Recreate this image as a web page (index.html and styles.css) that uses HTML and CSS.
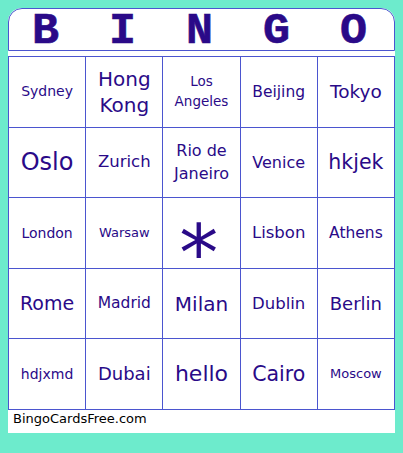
FILE: index.html
```html
<!DOCTYPE html>
<html>
<head>
<meta charset="utf-8">
<link rel="stylesheet" href="styles.css">
</head>
<body>
<div class="card">
  <div class="head">
    <span>B</span><span>I</span><span>N</span><span>G</span><span>O</span>
  </div>
  <div class="grid">
    <div class="cell s14">Sydney</div>
    <div class="cell s20 tall">Hong<br>Kong</div>
    <div class="cell s135 mid">Los<br>Angeles</div>
    <div class="cell s155">Beijing</div>
    <div class="cell s185">Tokyo</div>

    <div class="cell s24">Oslo</div>
    <div class="cell s165">Zurich</div>
    <div class="cell s16 mid2">Rio de<br>Janeiro</div>
    <div class="cell s16">Venice</div>
    <div class="cell s205">hkjek</div>

    <div class="cell s14">London</div>
    <div class="cell s13">Warsaw</div>
    <div class="cell free"><span class="star">*</span></div>
    <div class="cell s165">Lisbon</div>
    <div class="cell s155">Athens</div>

    <div class="cell s19">Rome</div>
    <div class="cell s155">Madrid</div>
    <div class="cell s20">Milan</div>
    <div class="cell s165">Dublin</div>
    <div class="cell s18">Berlin</div>

    <div class="cell s14">hdjxmd</div>
    <div class="cell s18">Dubai</div>
    <div class="cell s22">hello</div>
    <div class="cell s205">Cairo</div>
    <div class="cell s13">Moscow</div>
  </div>
  <div class="foot">BingoCardsFree.com</div>
</div>
</body>
</html>
```

FILE: styles.css
```css
html, body {
  margin: 0;
  padding: 0;
  background: #6debcc;
}
body {
  padding: 8px 8px 0 8px;
  font-family: "DejaVu Sans", sans-serif;
}
.card {
  width: 387px;
  background: #ffffff;
  border-radius: 14px 14px 0 0;
}
.head {
  box-sizing: border-box;
  height: 43px;
  border: 1px solid #4b55cf;
  border-radius: 14px 14px 0 0;
  display: grid;
  grid-template-columns: repeat(5, 1fr);
  align-items: center;
  justify-items: center;
  font-family: "Liberation Mono", "Courier New", monospace;
  font-weight: bold;
  font-size: 45px;
  line-height: 1;
  color: #2a0a88;
  padding-bottom: 2px;
}
.head span {
  transform: translateX(-2px);
  -webkit-text-stroke: 0.6px #2a0a88;
}
.grid {
  margin-top: 5px;
  box-sizing: border-box;
  width: 387px;
  height: 354px;
  display: grid;
  grid-template-columns: repeat(5, minmax(0, 1fr));
  grid-template-rows: repeat(5, minmax(0, 1fr));
  gap: 1px;
  padding: 1px;
  background: #4b55cf;
}
.cell {
  background: #ffffff;
  display: flex;
  align-items: center;
  justify-content: center;
  text-align: center;
  color: #2a0a88;
  line-height: 1.2;
  min-height: 0;
}
.tall { line-height: 1.3; }
.mid { line-height: 1.45; }
.mid2 { line-height: 1.45; }
.s13 { font-size: 13px; }
.s135 { font-size: 13.5px; }
.s14 { font-size: 14px; }
.s155 { font-size: 15.5px; }
.s16 { font-size: 16px; }
.s165 { font-size: 16.5px; }
.s18 { font-size: 18px; }
.s185 { font-size: 18.5px; }
.s19 { font-size: 19px; }
.s20 { font-size: 20px; }
.s205 { font-size: 20.5px; }
.s22 { font-size: 22px; }
.s24 { font-size: 24px; }
.free {
  overflow: hidden;
}
.star {
  display: block;
  font-size: 39px;
  line-height: 1;
  transform: translate(-3px, 20px) scale(2);
}
.foot {
  height: 23px;
  padding-left: 5px;
  font-size: 13px;
  line-height: 18px;
  color: #000000;
}
```
